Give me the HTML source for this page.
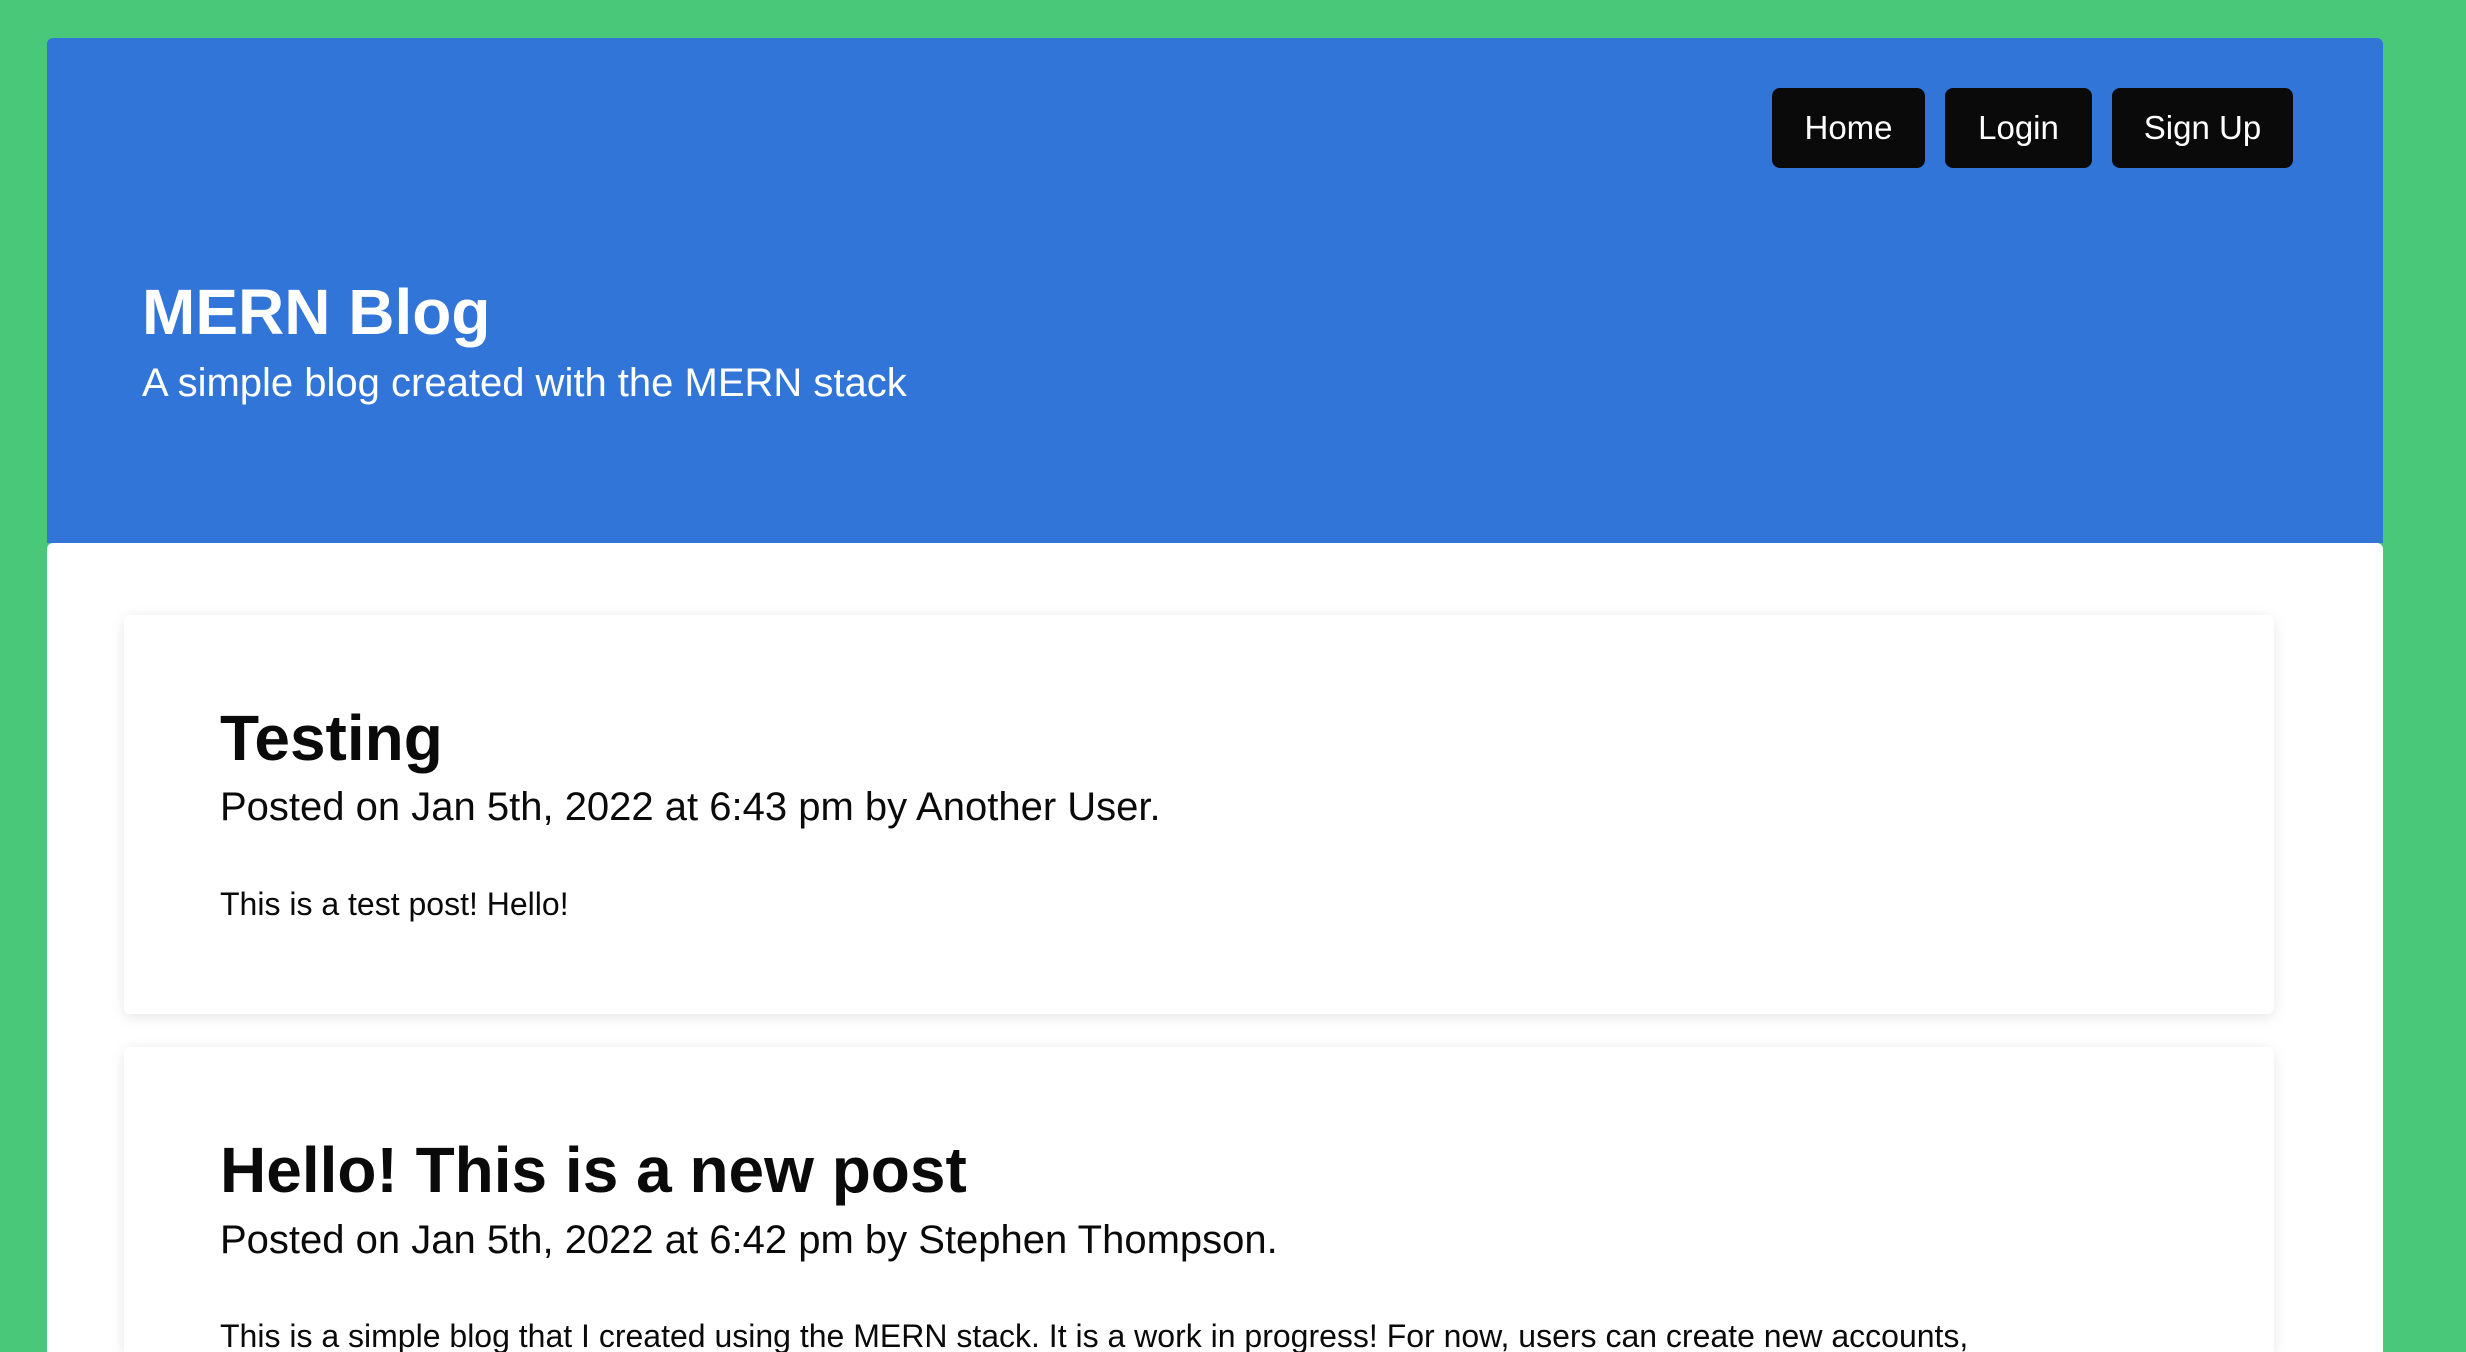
<!DOCTYPE html>
<html><head><meta charset="utf-8"><style>
html,body{margin:0;padding:0;width:2466px;height:1352px;overflow:hidden}
body{background:#4ac879;font-family:"Liberation Sans",Arial,sans-serif;position:relative}
.hdr{position:absolute;left:47px;top:38px;width:2336px;height:505px;background:#3175d9;border-radius:6px 6px 0 0}
.main{position:absolute;left:47px;top:543px;width:2336px;height:809px;background:#fff;border-radius:6px 6px 0 0;overflow:hidden}
.btn{position:absolute;top:88px;height:80px;background:#0a0a0a;color:#fff;border-radius:8px;font-size:33px;line-height:80px;text-align:center}
.t{position:absolute;white-space:nowrap;line-height:1}
.card{position:absolute;left:77px;width:2150px;background:#fff;border-radius:6px;box-shadow:0 3px 14px rgba(0,0,0,0.10)}
</style></head><body>
<div class="hdr"></div>
<div class="main">
<div class="card" style="top:72px;height:399px"></div>
<div class="card" style="top:504px;height:305px;border-radius:6px 6px 0 0"></div>
<div class="t" style="left:173px;top:777px;font-size:32px;color:#0a0a0a">This is a simple blog that I created using the MERN stack. It is a work in progress! For now, users can create new accounts,</div>
</div>
<div class="btn" style="left:1772px;width:153px">Home</div>
<div class="btn" style="left:1945px;width:147px">Login</div>
<div class="btn" style="left:2112px;width:181px">Sign Up</div>
<div class="t" style="left:142px;top:280px;font-size:64px;font-weight:bold;color:#fff">MERN Blog</div>
<div class="t" style="left:142px;top:363px;font-size:40px;color:#fff">A simple blog created with the MERN stack</div>
<div class="t" style="left:220px;top:706px;font-size:64px;font-weight:bold;color:#0a0a0a">Testing</div>
<div class="t" style="left:220px;top:787px;font-size:40px;color:#0a0a0a">Posted on Jan 5th, 2022 at 6:43 pm by Another User.</div>
<div class="t" style="left:220px;top:888px;font-size:32px;color:#0a0a0a">This is a test post! Hello!</div>
<div class="t" style="left:220px;top:1138px;font-size:64px;font-weight:bold;color:#0a0a0a">Hello! This is a new post</div>
<div class="t" style="left:220px;top:1220px;font-size:40px;color:#0a0a0a">Posted on Jan 5th, 2022 at 6:42 pm by Stephen Thompson.</div>
</body></html>
